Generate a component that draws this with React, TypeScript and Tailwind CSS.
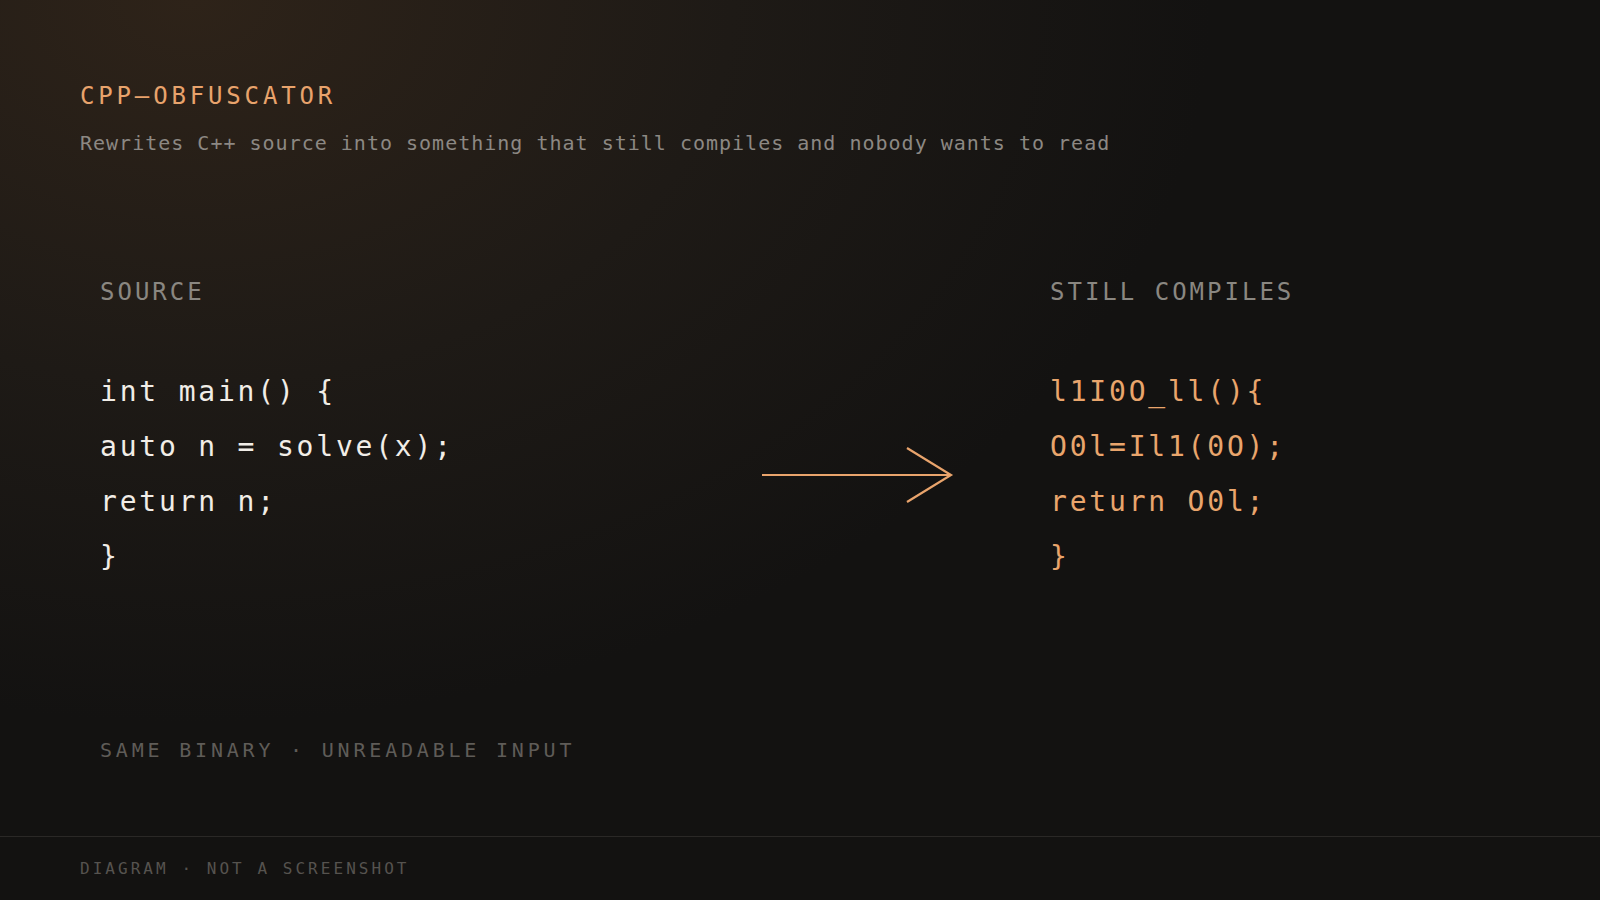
const mono = { fontFamily: '"DejaVu Sans Mono", "Liberation Mono", monospace' }

const sourceLines = ["int main() {", "auto n = solve(x);", "return n;", "}"]
const outputLines = ["l1I0O_ll(){", "O0l=Il1(0O);", "return O0l;", "}"]

function CodeBlock({ lines, tone }: { lines: string[]; tone: string }) {
  return (
    <div className={`flex flex-col ${tone}`}>
      {lines.map((line, i) => (
        <div key={i} className="h-[55px] whitespace-pre text-[28px] leading-[55px] tracking-[0.1em]">
          {line}
        </div>
      ))}
    </div>
  )
}

export default function App() {
  return (
    <div
      style={mono}
      className="flex h-screen w-full flex-col overflow-hidden bg-[#131211] bg-[radial-gradient(ellipse_1200px_850px_at_12%_0%,#2e2319_0%,#1e1a16_45%,#131211_85%)]"
    >
      {/* header */}
      <div className="px-20 pt-[81px]">
        <h1 className="text-[24px] leading-[30px] tracking-[0.16em] text-[#e8a36c]">CPP–OBFUSCATOR</h1>
        <p className="mt-[19px] text-[20px] leading-[26px] tracking-[0.05em] text-[#8c8883]">
          Rewrites C++ source into something that still compiles and nobody wants to read
        </p>
      </div>

      {/* diagram */}
      <div className="grid grid-cols-[650px_300px_1fr] px-[100px] pt-[121px]">
        <div className="flex flex-col">
          <div className="text-[24px] leading-[30px] tracking-[0.125em] text-[#8a8781]">SOURCE</div>
          <div className="mt-[57px]">
            <CodeBlock lines={sourceLines} tone="text-[#f1ede7]" />
          </div>
        </div>
        <div className="flex items-end pb-[79px]">
          <svg width="200" height="60" viewBox="0 0 200 60" className="ml-[12px]" fill="none">
            <path d="M0 30 H189" stroke="#e9a46c" strokeWidth="2.2" />
            <path d="M145 3 L189 30 L145 57" stroke="#e9a46c" strokeWidth="2.2" strokeLinejoin="miter" />
          </svg>
        </div>
        <div className="flex flex-col">
          <div className="text-[24px] leading-[30px] tracking-[0.125em] text-[#8a8781]">STILL COMPILES</div>
          <div className="mt-[57px]">
            <CodeBlock lines={outputLines} tone="text-[#e9a56c]" />
          </div>
        </div>
      </div>

      <div className="px-[100px] pt-[153px] text-[20px] leading-[26px] tracking-[0.19em] text-[#5f5c58]">
        SAME BINARY · UNREADABLE INPUT
      </div>

      {/* footer */}
      <div className="mt-auto border-t border-[#2a2826] bg-[#131211] px-20 pt-[22px] pb-[21px]">
        <div className="text-[16px] leading-[20px] tracking-[0.19em] text-[#56534f]">DIAGRAM · NOT A SCREENSHOT</div>
      </div>
    </div>
  )
}
